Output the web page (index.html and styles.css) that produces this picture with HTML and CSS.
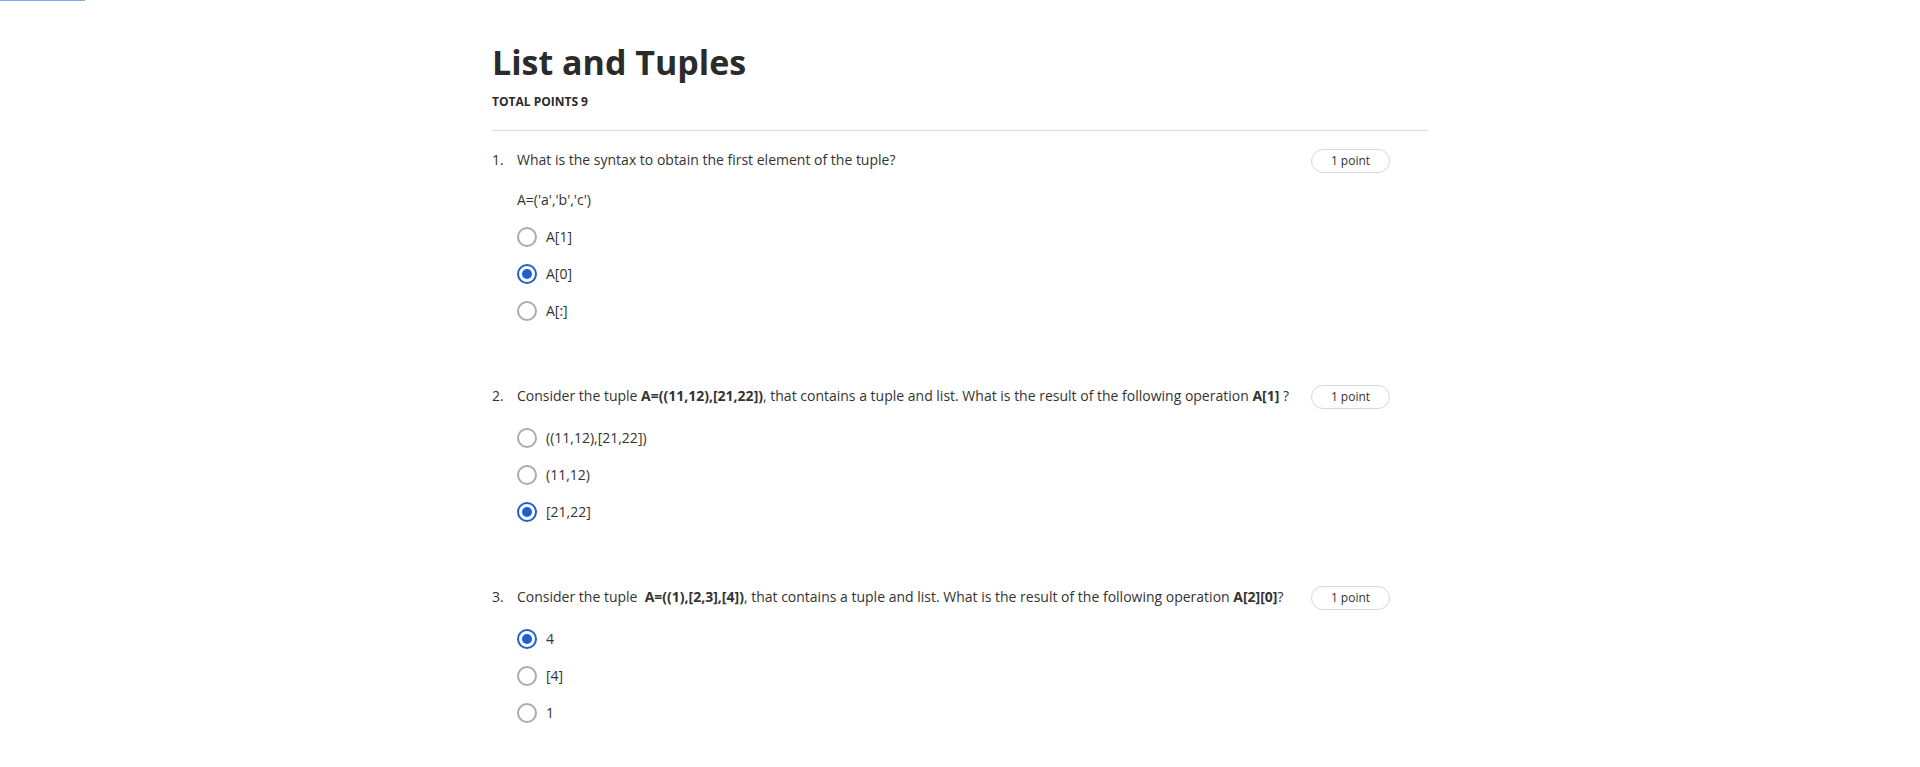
FILE: index.html
```html
<!DOCTYPE html>
<html lang="en">
<head>
<meta charset="utf-8">
<title>List and Tuples</title>
<link rel="stylesheet" href="styles.css">
</head>
<body>
<div class="progress"></div>
<main class="quiz">
  <header class="quiz-header">
    <h1 class="title">List and Tuples</h1>
    <div class="total">TOTAL POINTS 9</div>
  </header>

  <section class="question">
    <div class="q-row">
      <span class="q-num">1.</span>
      <div class="q-text">What is the syntax to obtain the first element of the tuple?</div>
      <span class="pill">1 point</span>
    </div>
    <div class="q-code">A=('a','b','c')</div>
    <ul class="options">
      <li class="option"><span class="radio"></span><span class="label">A[1]</span></li>
      <li class="option"><span class="radio checked"></span><span class="label">A[0]</span></li>
      <li class="option"><span class="radio"></span><span class="label">A[:]</span></li>
    </ul>
  </section>

  <section class="question">
    <div class="q-row">
      <span class="q-num">2.</span>
      <div class="q-text">Consider the tuple <b>A=((11,12),[21,22])</b>, that contains a tuple and list. What is the result of the following operation <b>A[1]</b> ?</div>
      <span class="pill">1 point</span>
    </div>
    <ul class="options">
      <li class="option"><span class="radio"></span><span class="label">((11,12),[21,22])</span></li>
      <li class="option"><span class="radio"></span><span class="label">(11,12)</span></li>
      <li class="option"><span class="radio checked"></span><span class="label">[21,22]</span></li>
    </ul>
  </section>

  <section class="question">
    <div class="q-row">
      <span class="q-num">3.</span>
      <div class="q-text">Consider the tuple&nbsp; <b>A=((1),[2,3],[4])</b>, that contains a tuple and list. What is the result of the following operation <b>A[2][0]</b>?</div>
      <span class="pill">1 point</span>
    </div>
    <ul class="options">
      <li class="option"><span class="radio checked"></span><span class="label">4</span></li>
      <li class="option"><span class="radio"></span><span class="label">[4]</span></li>
      <li class="option"><span class="radio"></span><span class="label">1</span></li>
    </ul>
  </section>
</main>
</body>
</html>
```

FILE: styles.css
```css
html, body {
  margin: 0;
  padding: 0;
  background: #ffffff;
}

body {
  font-family: "Open Sans", "Liberation Sans", sans-serif;
  color: #333333;
  overflow: hidden;
}

.progress {
  width: 85px;
  height: 1px;
  background: #7aa9f6;
}

.quiz {
  width: 936px;
  margin: 0 auto;
}

.quiz-header {
  padding-top: 37px;
  padding-bottom: 20px;
  border-bottom: 1px solid #dcdcdc;
}

.title {
  margin: 0;
  font-size: 34px;
  line-height: 48px;
  font-weight: 700;
  color: #2b2b2b;
}

.total {
  margin-top: 8px;
  font-size: 12px;
  line-height: 16px;
  font-weight: 700;
  color: #2b2b2b;
}

.question {
  padding-top: 17px;
  padding-bottom: 38px;
}

.q-row {
  display: flex;
  align-items: flex-start;
  font-size: 14px;
  line-height: 24px;
}

.q-num {
  width: 25px;
  flex: none;
}

.q-text {
  flex: 1;
}

.q-text b {
  font-weight: 700;
}

.pill {
  flex: none;
  width: 77px;
  height: 22px;
  margin: 1px 38px 0 18px;
  border: 1px solid #d6d6d6;
  border-radius: 12px;
  font-size: 12px;
  line-height: 22px;
  text-align: center;
  color: #333333;
}

.q-code {
  margin: 15px 0 0 25px;
  font-size: 14px;
  line-height: 24px;
}

.options {
  list-style: none;
  margin: 6px 0 0 25px;
  padding: 0;
}

.q-row + .options {
  margin-top: 10px;
}

.option {
  display: flex;
  align-items: center;
  height: 37px;
  font-size: 14px;
}

.radio {
  box-sizing: border-box;
  width: 20px;
  height: 20px;
  border: 2px solid #ababab;
  border-radius: 50%;
  margin-right: 9px;
  display: flex;
  align-items: center;
  justify-content: center;
  flex: none;
}

.radio.checked {
  border-color: #1f5fd1;
}

.radio.checked::after {
  content: "";
  width: 10px;
  height: 10px;
  border-radius: 50%;
  background: #1f5fd1;
}

.label {
  color: #333333;
}
```
